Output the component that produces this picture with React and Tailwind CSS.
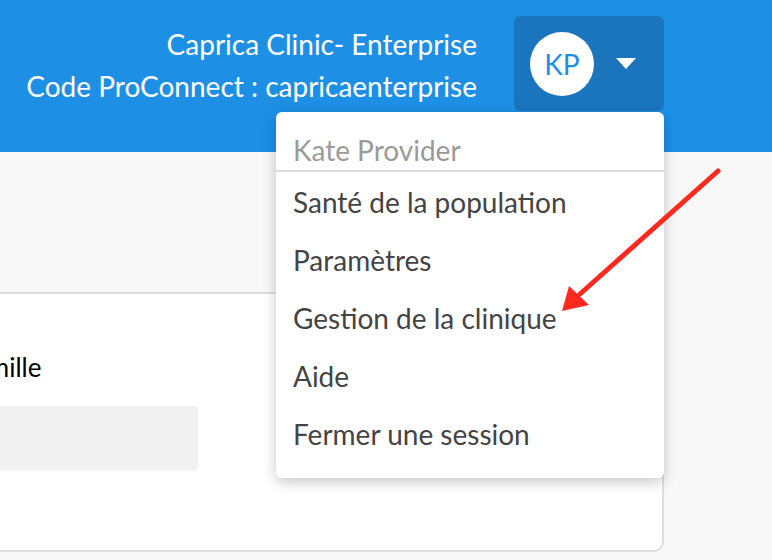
import { useState } from 'react';

const menuItems = [
  'Santé de la population',
  'Paramètres',
  'Gestion de la clinique',
  'Aide',
  'Fermer une session',
];

function UserMenu() {
  return (
    <div className="absolute left-[276px] top-[112px] w-[388px] rounded-md bg-white shadow-[0_4px_14px_rgba(0,0,0,0.22)]">
      <div className="px-[17px] pt-[22px] pb-[4px] text-[28px] leading-[32px] text-[#9a9a9a]">
        Kate Provider
      </div>
      <div className="h-[2px] bg-[#dcdcdc]" />
      <ul className="pt-[1px] pb-[15px]">
        {menuItems.map((item) => (
          <li
            key={item}
            className="px-[17px] h-[58px] flex items-center text-[28px] text-[#444]"
          >
            {item}
          </li>
        ))}
      </ul>
    </div>
  );
}

export default function App() {
  const [open] = useState(true);

  return (
    <div className="relative h-[560px] w-full overflow-hidden bg-[#f8f8f8] font-['Lato',sans-serif]">
      {/* Top bar */}
      <header className="h-[152px] bg-[#1d90e6] flex items-start justify-end pr-[108px] pt-[16px]">
        <div className="mr-[37px] mt-[7px] text-right text-white text-[28px] leading-[42px]">
          <div>Caprica Clinic- Enterprise</div>
          <div>Code ProConnect : capricaenterprise</div>
        </div>
        <button className="flex h-[95px] w-[150px] items-center gap-[22px] rounded-md bg-[#1a75bd] pl-[16px]">
          <span className="flex h-[64px] w-[64px] items-center justify-center rounded-full bg-white text-[28px] text-[#1d90e6]">
            KP
          </span>
          <svg width="20" height="12" viewBox="0 0 20 12">
            <path d="M0 0 H20 L10 11 Z" fill="#fff" />
          </svg>
        </button>
      </header>

      {/* Page content */}
      <main className="pt-[140px]">
        <div className="h-[260px] w-[664px] rounded-br-[10px] border-t-2 border-r-2 border-b-2 border-[#dedede] bg-white">
          <div className="ml-[-38px] pt-[58px]">
            <div className="text-[26px] leading-[30px] text-black">Famille</div>
            <div className="mt-[24px] h-[65px] w-[236px] rounded-sm bg-[#f1f1f1]" />
          </div>
        </div>
      </main>

      {open && <UserMenu />}

      {/* annotation arrow */}
      <svg className="absolute left-0 top-0 pointer-events-none" width="772" height="560">
        <line x1="718" y1="171" x2="580" y2="294" stroke="#ff2a1f" strokeWidth="5" strokeLinecap="round" />
        <polygon points="562,311 569,286 589,305" fill="#ff2a1f" />
      </svg>
    </div>
  );
}
